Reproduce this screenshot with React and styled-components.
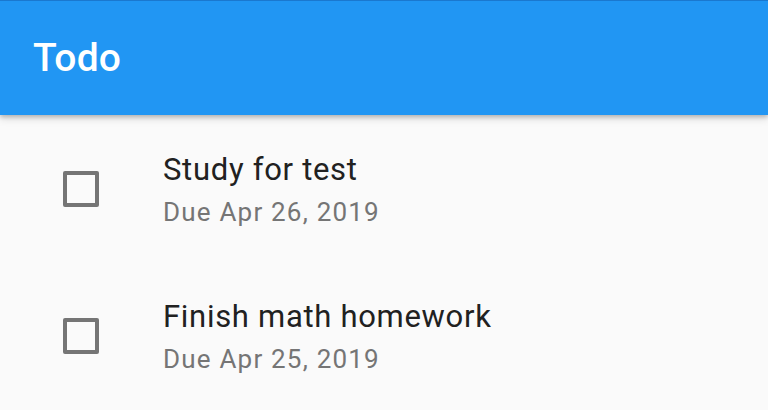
import React from 'react'
import styled, { createGlobalStyle } from 'styled-components'

const GlobalStyle = createGlobalStyle`
    html, body {
        margin: 0;
        padding: 0;
        background: #fafafa;
        font-family: Roboto, "Liberation Sans", sans-serif;
    }
`

const Page = styled.div`
    width: 768px;
    height: 410px;
    overflow: hidden;
    background: #fafafa;
    display: flex;
    flex-direction: column;
`

const AppBar = styled.header`
    position: relative;
    z-index: 1;
    height: 114px;
    flex-shrink: 0;
    border-top: 1px solid #1a78cf;
    background: #2196f3;
    display: flex;
    align-items: center;
    padding-left: 33px;
    box-shadow: 0 2px 4px rgba(0, 0, 0, 0.2), 0 4px 8px rgba(0, 0, 0, 0.12);
    & h1 {
        margin: 0;
        color: #fff;
        font-size: 39px;
        font-weight: 500;
        letter-spacing: 0.2px;
    }
`

const List = styled.div`
    display: flex;
    flex-direction: column;
`

const Row = styled.div`
    height: 147px;
    display: flex;
    align-items: center;
    padding-left: 63px;
`

const Box = styled.div`
    width: 36px;
    height: 36px;
    box-sizing: border-box;
    border: 4px solid #757575;
    border-radius: 2px;
    flex-shrink: 0;
    background: ${p => (p.checked ? '#2196f3' : 'transparent')};
`

const Text = styled.div`
    margin-left: 64px;
    padding-top: 3px;
    display: flex;
    flex-direction: column;
    & b {
        font-weight: 400;
        font-size: 31px;
        line-height: 36px;
        letter-spacing: 0.7px;
        color: #212121;
    }
    & p {
        margin: 8px 0 0;
        font-size: 26px;
        line-height: 32px;
        letter-spacing: 1.2px;
        color: #757575;
    }
`

const Todo = ({ title, due, checked = false }) => {
    return <Row>
        <Box checked={checked} />
        <Text>
            <b>{title}</b>
            <p>{due}</p>
        </Text>
    </Row>
}

const App = () => {
    return <Page>
        <GlobalStyle />
        <AppBar><h1>Todo</h1></AppBar>
        <List>
            <Todo title={'Study for test'} due={'Due Apr 26, 2019'} />
            <Todo title={'Finish math homework'} due={'Due Apr 25, 2019'} />
        </List>
    </Page>
}

export default App
